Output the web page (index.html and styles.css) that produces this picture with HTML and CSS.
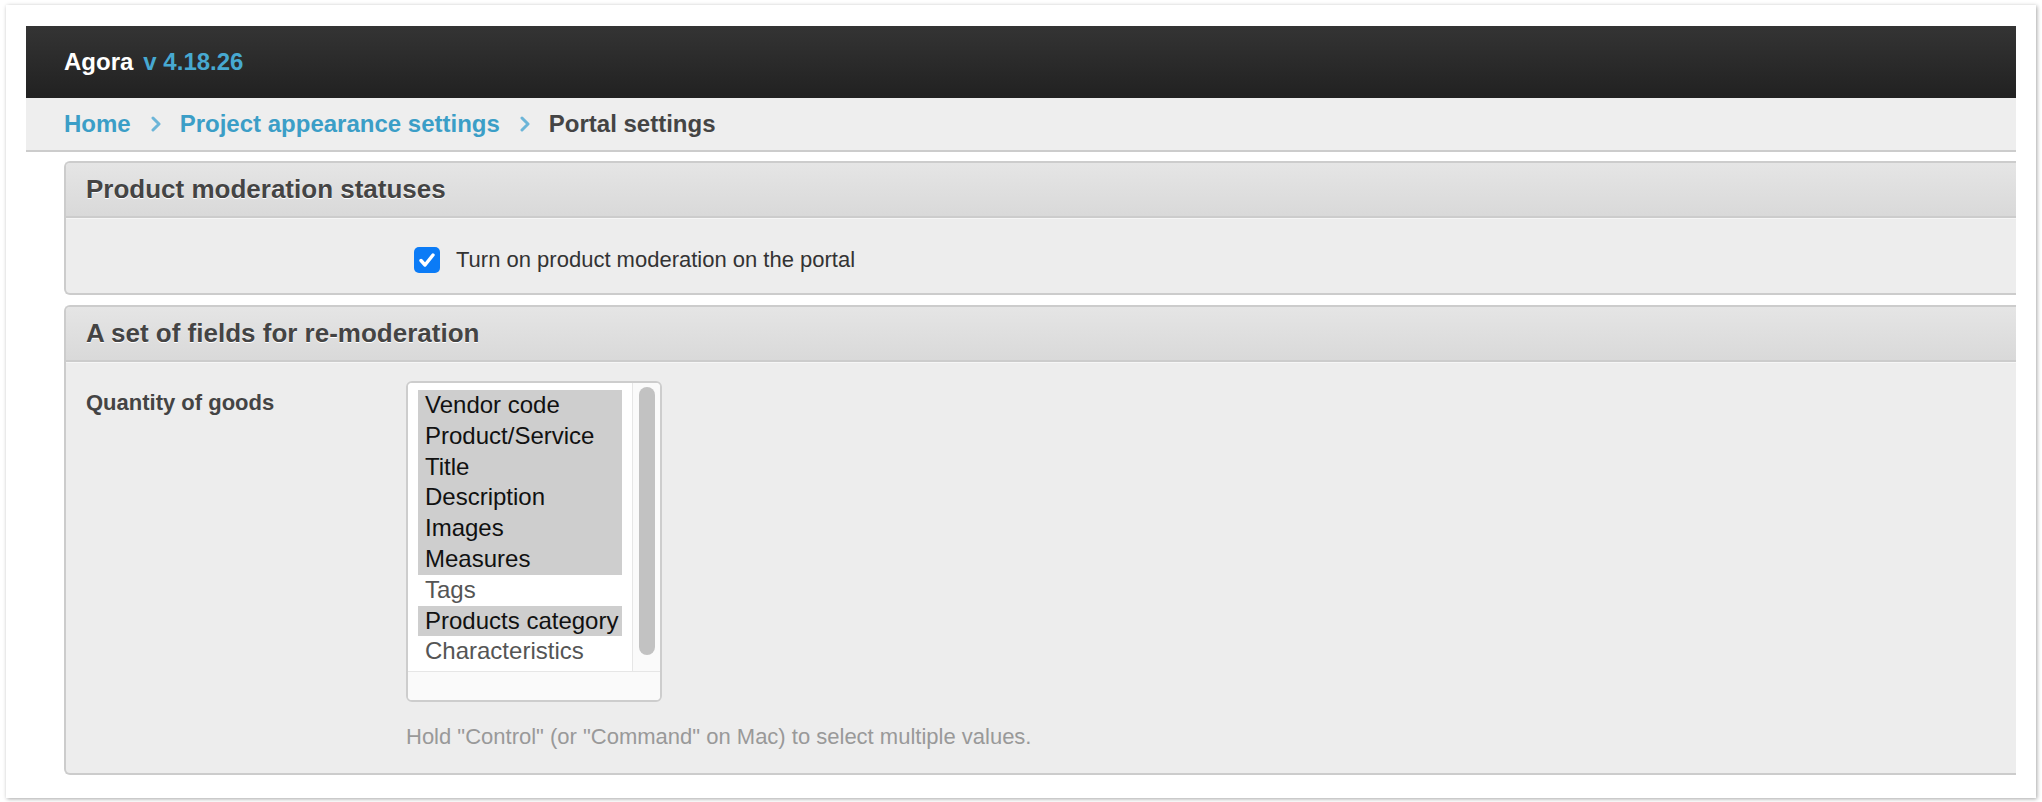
FILE: index.html
```html
<!DOCTYPE html>
<html lang="en">
<head>
<meta charset="utf-8">
<title>Portal settings | Agora</title>
<link rel="stylesheet" href="styles.css">
</head>
<body>
<div class="frame">
  <header class="topbar">
    <span class="brand">Agora</span><span class="version">v 4.18.26</span>
  </header>
  <nav class="crumbs">
    <a class="crumb-link" href="#">Home</a>
    <svg class="chev" viewBox="0 0 12 16" width="12" height="16"><path d="M3 2 L9 8 L3 14" fill="none" stroke="#6cb5d8" stroke-width="3" stroke-linecap="round" stroke-linejoin="round"/></svg>
    <a class="crumb-link" href="#">Project appearance settings</a>
    <svg class="chev" viewBox="0 0 12 16" width="12" height="16"><path d="M3 2 L9 8 L3 14" fill="none" stroke="#6cb5d8" stroke-width="3" stroke-linecap="round" stroke-linejoin="round"/></svg>
    <span class="crumb-current">Portal settings</span>
  </nav>
  <main class="content">
    <section class="panel">
      <h2 class="panel-title">Product moderation statuses</h2>
      <div class="panel-body body-check">
        <div class="form-row">
          <div class="form-label"></div>
          <label class="check-row">
            <span class="checkbox"><svg viewBox="0 0 26 26" width="26" height="26"><path d="M7 13.5 L11 18 L19 8" fill="none" stroke="#fff" stroke-width="3.4" stroke-linecap="round" stroke-linejoin="round"/></svg></span>
            <span class="check-text">Turn on product moderation on the portal</span>
          </label>
        </div>
      </div>
    </section>
    <section class="panel panel-second">
      <h2 class="panel-title">A set of fields for re-moderation</h2>
      <div class="panel-body body-fields">
        <div class="form-row">
          <div class="form-label strong">Quantity of goods</div>
          <div class="form-field">
            <div class="listbox">
              <div class="list-main">
                <div class="options">
                  <div class="opt sel">Vendor code</div>
                  <div class="opt sel">Product/Service</div>
                  <div class="opt sel">Title</div>
                  <div class="opt sel">Description</div>
                  <div class="opt sel">Images</div>
                  <div class="opt sel">Measures</div>
                  <div class="opt">Tags</div>
                  <div class="opt sel">Products category</div>
                  <div class="opt">Characteristics</div>
                </div>
                <div class="vscroll"><div class="thumb"></div></div>
              </div>
              <div class="hscroll"></div>
            </div>
            <p class="help">Hold "Control" (or "Command" on Mac) to select multiple values.</p>
          </div>
        </div>
      </div>
    </section>
  </main>
</div>
</body>
</html>
```
FILE: styles.css
```css
* { box-sizing: border-box; }
html, body { margin: 0; padding: 0; background: #fff; }
body {
  font-family: "Liberation Sans", Arial, sans-serif;
  color: #333;
  padding: 5px 6px 4px 6px;
}
.frame {
  background: #fff;
  height: 793px;
  padding: 21px 20px 23px 20px;
  box-shadow: 1px 1px 4px rgba(0,0,0,0.35);
  overflow: hidden;
}
.topbar {
  height: 72px;
  background: linear-gradient(#343434, #212121);
  display: flex;
  align-items: center;
  padding-left: 38px;
  font-weight: bold;
  font-size: 24px;
}
.brand { color: #fff; }
.version { color: #47a9d1; margin-left: 10px; }
.crumbs {
  height: 54px;
  background: #eee;
  border-bottom: 2px solid #ccc;
  display: flex;
  align-items: center;
  padding-left: 38px;
  font-size: 24px;
  font-weight: bold;
}
.crumb-link { color: #3b9ec7; text-decoration: none; }
.crumb-current { color: #444; }
.chev { margin: 0 18px 0 19px; }
.content {
  padding: 9px 0 0 38px;
}
.panel {
  border: 2px solid #ccc;
  border-right: none;
  border-radius: 6px 0 0 6px;
  background: #ededed;
  overflow: hidden;
}
.panel-second { margin-top: 10px; }
.panel-title {
  margin: 0;
  height: 55px;
  line-height: 53px;
  padding-left: 20px;
  font-size: 26px;
  font-weight: bold;
  color: #444;
  text-shadow: 0 1px 0 #fff;
  background: linear-gradient(#e5e5e5, #d9d9d9);
  border-bottom: 2px solid #ccc;
}
.panel-body {
  border-top: 1px solid #f6f6f6;
  padding-left: 20px;
}
.body-check { height: 75px; padding-top: 28px; }
.body-fields { height: 411px; padding-top: 18px; }
.form-row { display: flex; }
.form-label { width: 320px; flex: none; }
.form-label.strong {
  font-size: 22px;
  font-weight: bold;
  color: #444;
  line-height: 26px;
  padding-top: 9px;
}
.check-row {
  display: flex;
  align-items: center;
  margin-left: 8px;
  height: 26px;
}
.checkbox {
  width: 26px;
  height: 26px;
  border-radius: 5px;
  background: #0b7bf6;
  display: block;
}
.checkbox svg { display: block; }
.check-text {
  margin-left: 16px;
  font-size: 22px;
  color: #333;
}
.form-field { display: flex; flex-direction: column; }
.listbox {
  width: 256px;
  height: 321px;
  border: 2px solid #cdcdcd;
  border-radius: 6px;
  background: #fafafa;
  display: flex;
  flex-direction: column;
  overflow: hidden;
}
.list-main {
  display: flex;
  height: 289px;
  border-bottom: 1px solid #e6e6e6;
}
.options {
  flex: 1;
  background: #fff;
  padding: 7px 10px 0 10px;
}
.opt {
  height: 30.8px;
  line-height: 30.8px;
  padding-left: 7px;
  font-size: 24px;
  color: #555;
  white-space: nowrap;
}
.opt.sel { background: #cecece; color: #111; }
.vscroll {
  width: 28px;
  flex: none;
  background: #fafafa;
  border-left: 1px solid #e6e6e6;
  padding: 4px 5px 0 6px;
}
.thumb {
  height: 268px;
  border-radius: 8px;
  background: #c2c2c2;
}
.hscroll { flex: 1; background: #fafafa; }
.help {
  margin: 22px 0 0 0;
  font-size: 22px;
  line-height: 26px;
  color: #999;
}
```
